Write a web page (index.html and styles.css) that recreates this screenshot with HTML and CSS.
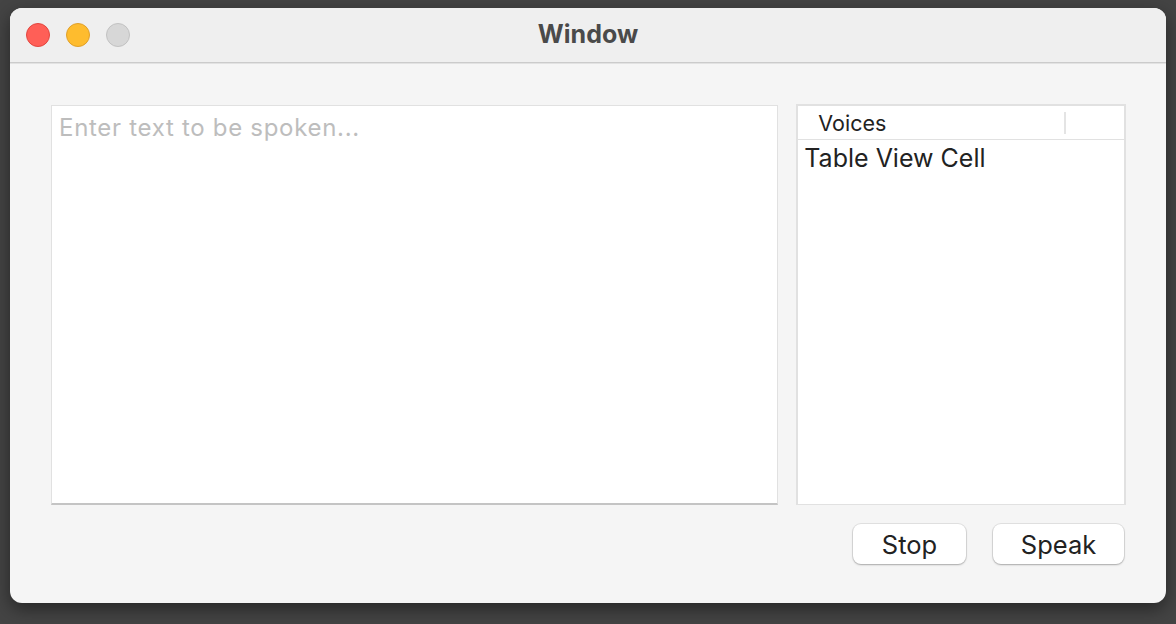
FILE: index.html
```html
<!DOCTYPE html>
<html lang="en">
<head>
<meta charset="UTF-8" />
<title>Window</title>
<link rel="stylesheet" href="styles.css">
</head>
<body>

<div class="window">
  <div class="titlebar">
    <div class="lights">
      <span class="light red"></span>
      <span class="light yellow"></span>
      <span class="light gray"></span>
    </div>
    <div class="title">Window</div>
  </div>

  <div class="content">
    <div class="panes">
      <textarea class="speech-text" placeholder="Enter text to be spoken..."></textarea>

      <div class="voices">
        <div class="voices-head">
          <span class="col-title">Voices</span>
          <span class="col-divider"></span>
        </div>
        <div class="voices-row">Table View Cell</div>
      </div>
    </div>

    <div class="actions">
      <button class="btn btn-stop">Stop</button>
      <button class="btn btn-speak">Speak</button>
    </div>
  </div>
</div>

</body>
</html>
```

FILE: styles.css
```css
:root {
  --desk: #444;
  --title-bg: #efefef;
  --win-bg: #f5f5f5;
  --line: #e1e1e1;
  --text: #222;
}
* { box-sizing: border-box; }
body {
  margin: 0;
  padding: 8px 10px 21px;
  background: var(--desk);
  font-family: Inter, "Open Sans", sans-serif;
  overflow: hidden;
}
.window {
  width: 1156px;
  height: 595px;
  background: var(--win-bg);
  border-radius: 12px;
  overflow: hidden;
  box-shadow: 0 6px 18px rgba(0, 0, 0, 0.45);
  display: flex;
  flex-direction: column;
}
.titlebar {
  height: 55px;
  background: var(--title-bg);
  border-bottom: 1px solid #cbcbcb;
  box-shadow: 0 1px 0 #e2e2e2;
  display: flex;
  align-items: center;
  padding-left: 16px;
}
.lights {
  display: flex;
  gap: 16px;
  margin-top: -1px;
}
.light {
  width: 24px;
  height: 24px;
  border-radius: 50%;
  display: block;
}
.light.red { background: #ff5f57; border: 1px solid #e2463f; }
.light.yellow { background: #febc2e; border: 1px solid #e0a02a; }
.light.gray { background: #d7d7d7; border: 1px solid #c2c2c2; }
.title {
  flex: 1;
  text-align: center;
  font-weight: 700;
  font-size: 25px;
  color: #4a4a4a;
  margin-right: 120px;
  margin-top: -2px;
}
.content {
  flex: 1;
  padding: 41px 40px 0 41px;
}
.panes {
  display: flex;
  gap: 18px;
}
.speech-text {
  width: 728px;
  height: 400px;
  margin-top: 1px;
  border: 1px solid var(--line);
  border-bottom: 2px solid #c4c4c4;
  background: #fff;
  resize: none;
  outline: none;
  font-family: inherit;
  font-size: 24px;
  letter-spacing: 0.7px;
  color: var(--text);
  padding: 7px 7px;
}
.speech-text::placeholder {
  color: #bdbdbd;
}
.voices {
  width: 330px;
  height: 401px;
  background: #fff;
  border: 2px solid var(--line);
  border-bottom-width: 1px;
}
.voices-head {
  height: 34px;
  border-bottom: 1px solid var(--line);
  display: flex;
  align-items: center;
  padding-left: 20px;
}
.col-title {
  font-size: 21.5px;
  color: var(--text);
  width: 246px;
}
.col-divider {
  width: 2px;
  height: 22px;
  background: #e4e4e4;
}
.voices-row {
  font-size: 25px;
  color: var(--text);
  padding: 3px 6px;
}
.actions {
  display: flex;
  justify-content: flex-end;
  gap: 27px;
  margin-top: 19px;
  padding-right: 2px;
}
.btn {
  height: 40px;
  padding: 0;
  background: #fff;
  border: none;
  border-radius: 8px;
  box-shadow: 0 0 0 1px rgba(0, 0, 0, 0.08), 0 1px 2px rgba(0, 0, 0, 0.25);
  font-family: inherit;
  font-size: 25.5px;
  color: var(--text);
}
.btn-stop { width: 113px; }
.btn-speak { width: 131px; }
```
